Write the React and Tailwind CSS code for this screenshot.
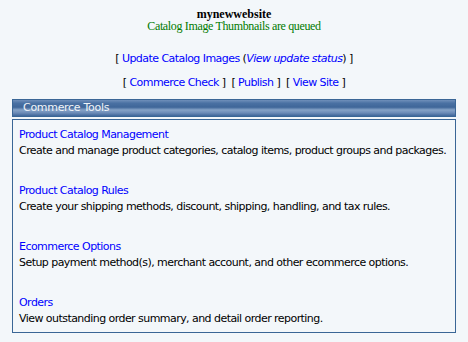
export default function App() {
  const items = [
    ["Product Catalog Management", "Create and manage product categories, catalog items, product groups and packages."],
    ["Product Catalog Rules", "Create your shipping methods, discount, shipping, handling, and tax rules."],
    ["Ecommerce Options", "Setup payment method(s), merchant account, and other ecommerce options."],
    ["Orders", "View outstanding order summary, and detail order reporting."],
  ];
  const v = { fontFamily: '"DejaVu Sans", Verdana, sans-serif' };
  const serif = { fontFamily: '"Liberation Serif", "Times New Roman", serif' };
  return (
    <div className="w-[468px] h-[342px] bg-[#f3f7fa] overflow-hidden text-black" style={v}>
      <div className="pt-[8px] text-center" style={serif}>
        <div className="text-[12px] leading-[12px] font-bold">mynewwebsite</div>
        <div className="text-[12px] leading-[13px] tracking-[-0.35px] text-[#007a00]">Catalog Image Thumbnails are queued</div>
      </div>
      <div className="mt-[19px] text-center text-[11px] leading-[14px] tracking-[-0.55px]">
        [ <a className="text-[#0000ff]">Update Catalog Images</a> (<a className="text-[#0000ff] italic">View update status</a>) ]
      </div>
      <div className="mt-[10px] text-center text-[11px] leading-[14px] tracking-[-0.55px] whitespace-pre">
        {"[ "}<a className="text-[#0000ff]">Commerce Check</a>{" ]  [ "}<a className="text-[#0000ff]">Publish</a>{" ]  [ "}<a className="text-[#0000ff]">View Site</a>{" ]"}
      </div>
      <div className="mx-[12px] mt-[9px]">
        <div className="h-[18px] border border-[#3a6696] bg-[linear-gradient(#6f8fba_0%,#4a71a3_20%,#3f6699_45%,#86a3c7_62%,#6d8cb8_80%,#3f6699_100%)] flex items-center pl-[10px] text-[11px] tracking-[-0.3px] text-[#f0f4f8]">
          Commerce Tools
        </div>
        <div className="mt-[2px] border border-[#3a6696] h-[214px] pl-[6px] pt-[7px] flex flex-col gap-[24px] text-[11px] leading-[16px] tracking-[-0.55px]">
          {items.map(([t, d]) => (
            <div key={t}>
              <a className="text-[#0000ff] block">{t}</a>
              <div className="whitespace-nowrap">{d}</div>
            </div>
          ))}
        </div>
      </div>
    </div>
  );
}
